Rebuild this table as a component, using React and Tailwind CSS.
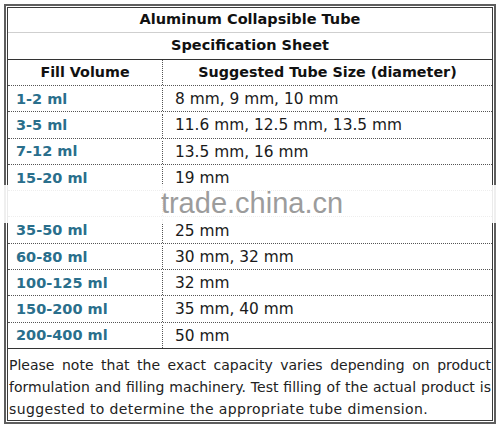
import React from "react";

const rows = [
  ["1-2 ml", "8 mm, 9 mm, 10 mm"],
  ["3-5 ml", "11.6 mm, 12.5 mm, 13.5 mm"],
  ["7-12 ml", "13.5 mm, 16 mm"],
  ["15-20 ml", "19 mm"],
  ["", ""],
  ["35-50 ml", "25 mm"],
  ["60-80 ml", "30 mm, 32 mm"],
  ["100-125 ml", "32 mm"],
  ["150-200 ml", "35 mm, 40 mm"],
  ["200-400 ml", "50 mm"],
];

const App = () => {
  return (
    <div
      className="relative w-[500px] h-[429px] bg-white pt-[4px] pl-[4px] text-[#111]"
      style={{ fontFamily: '"DejaVu Sans", Verdana, sans-serif' }}
    >
      <div className="w-[492px] border-2 border-[#5e5e5e] p-px">
        <div className="border border-[#3a3a3a]">
          {/* Title rows */}
          <div className="h-[25px] flex items-center justify-center border-b border-[#cfcfcf] text-[14.5px] font-bold">
            Aluminum Collapsible Tube
          </div>
          <div className="h-[27px] flex items-center justify-center border-b border-[#333] text-[14.5px] font-bold">
            Specification Sheet
          </div>

          {/* Header */}
          <div className="h-[26px] flex border-b border-dotted border-[#555] text-[14.3px] font-bold">
            <div className="w-[155px] flex items-center justify-center border-r border-dotted border-[#555]">
              Fill Volume
            </div>
            <div className="flex-1 flex items-center justify-center">
              Suggested Tube Size (diameter)
            </div>
          </div>

          {/* Data rows */}
          {rows.map(([vol, size], i) => (
            <div
              key={i}
              className={
                "h-[26.3px] flex pt-[2px] " +
                (i === rows.length - 1
                  ? "border-b border-[#333]"
                  : "border-b border-dotted border-[#555]")
              }
            >
              <div className="w-[155px] flex items-center pl-[8px] border-r border-dotted border-[#555] font-bold text-[14.5px] text-[#2a6f8c]">
                {vol}
              </div>
              <div className="flex-1 flex items-center pl-[12px] text-[15.4px] text-[#1a1a1a]">
                {size}
              </div>
            </div>
          ))}

          {/* Note */}
          <div className="h-[71px] px-px pt-[5px] text-[14px] leading-[22px] text-[#222]">
            <div className="text-justify [text-align-last:justify]">
              Please note that the exact capacity varies depending on product
            </div>
            <div className="text-justify [text-align-last:justify]">
              formulation and filling machinery. Test filling of the actual product is
            </div>
            <div className="tracking-[0.37px]">
              suggested to determine the appropriate tube dimension.
            </div>
          </div>
        </div>
      </div>

      {/* Watermark */}
      <div className="absolute left-0 top-[185px] w-[500px] h-[38px] bg-white/90 flex items-center justify-center pointer-events-none">
        <span
          className="text-[29px] text-[#9c9c9c] ml-[4px]"
          style={{ fontFamily: '"Liberation Sans", Arial, sans-serif' }}
        >
          trade.china.cn
        </span>
      </div>
    </div>
  );
};

export default App;
